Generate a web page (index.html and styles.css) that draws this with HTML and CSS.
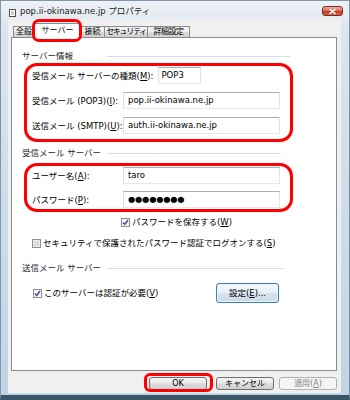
FILE: index.html
```html
<!DOCTYPE html>
<html lang="ja">
<head>
 <meta charset="UTF-8">
 <title>pop.ii-okinawa.ne.jp プロパティ</title>
 <link rel="stylesheet" href="styles.css">
</head>
<body>
<div class="window">
 <div class="titlebar">
  <svg class="appicon" width="7" height="8" viewBox="0 0 7 8"><rect x="0.5" y="0.5" width="6" height="7" fill="#fff" stroke="#4d4d4d"/><path d="M2 3h3M2 5h3" stroke="#9a9a9a"/></svg>
  <span class="title">pop.ii-okinawa.ne.jp プロパティ</span>
  <span class="close"><svg width="9" height="7" viewBox="0 0 9 7"><path d="M1.5 1l6 5M7.5 1l-6 5" stroke="#fff" stroke-width="1.6"/></svg></span>
 </div>
 <div class="client">
  <div class="tabs">
   <span class="tab tab_general">全般</span>
   <span class="tab tab_server selected">サーバー</span>
   <span class="tab tab_conn">接続</span>
   <span class="tab tab_sec">セキュリティ</span>
   <span class="tab tab_adv">詳細設定</span>
  </div>
  <div class="sheet">
   <div class="legend legend_wide"><span>サーバー情報</span><i></i></div>
   <div class="mark mark_info">
    <div class="row"><span class="lbl_auto">受信メール サーバーの種類(<u>M</u>):</span><span class="field field_short">POP3</span></div>
    <div class="row"><span class="lbl">受信メール (POP3)(<u>I</u>):</span><span class="field">pop.ii-okinawa.ne.jp</span></div>
    <div class="row"><span class="lbl">送信メール (SMTP)(<u>U</u>):</span><span class="field">auth.ii-okinawa.ne.jp</span></div>
   </div>
   <div class="legend legend_in"><span>受信メール サーバー</span><i></i></div>
   <div class="mark mark_login">
    <div class="row"><span class="lbl">ユーザー名(<u>A</u>):</span><span class="field">taro</span></div>
    <div class="row"><span class="lbl">パスワード(<u>P</u>):</span><span class="field field_pw">●●●●●●●●</span></div>
   </div>
   <div class="check check_save">
    <svg class="box" width="9" height="9" viewBox="0 0 9 9"><rect x="0.5" y="0.5" width="8" height="8" fill="#f4f4f4" stroke="#8e8f8f"/><path d="M2 4.5l1.8 2L7 2" fill="none" stroke="#3a4f86" stroke-width="1.4"/></svg>
    <span>パスワードを保存する(<u>W</u>)</span>
   </div>
   <div class="check check_sec">
    <svg class="box" width="9" height="9" viewBox="0 0 9 9"><rect x="0.5" y="0.5" width="8" height="8" fill="#ececec" stroke="#8e8f8f"/><rect x="2" y="2" width="5" height="5" fill="#dcdcdc"/></svg>
    <span>セキュリティで保護されたパスワード認証でログオンする(<u>S</u>)</span>
   </div>
   <div class="legend legend_out"><span>送信メール サーバー</span><i></i></div>
   <div class="auth">
    <div class="check">
     <svg class="box" width="9" height="9" viewBox="0 0 9 9"><rect x="0.5" y="0.5" width="8" height="8" fill="#f4f4f4" stroke="#8e8f8f"/><path d="M2 4.5l1.8 2L7 2" fill="none" stroke="#3a4f86" stroke-width="1.4"/></svg>
     <span>このサーバーは認証が必要(<u>V</u>)</span>
    </div>
    <span class="btn btn_settings">設定(<u>E</u>)...</span>
   </div>
  </div>
  <div class="actions">
   <span class="btn btn_dlg btn_ok">OK</span>
   <span class="btn btn_dlg btn_cancel">キャンセル</span>
   <span class="btn btn_dlg disabled">適用(<u>A</u>)</span>
  </div>
 </div>
</div>
</body>
</html>
```

FILE: styles.css
```css
body{
  margin: 0;
  font-family: "DejaVu Sans", "Noto Sans CJK JP", sans-serif;
  font-size: 8.5px;
  line-height: 12px;
  color: #000;
}
.window{
  width: 350px;
  height: 400px;
  box-sizing: border-box;
  display: flex;
  flex-direction: column;
  border: 1px solid #7f95aa;
  border-bottom: 5px solid #3b5767;
  padding: 0 8px 2px 7px;
  background: linear-gradient(#eef2f5, #dbe5ee 30px, #c0d4e5);
}
.titlebar{
  height: 18px;
  display: flex;
  align-items: center;
  padding-top: 2px;
  box-sizing: border-box;
}
.appicon{
  margin: 4px 0 0 1px;
}
.title{
  margin-left: 4px;
  color: #1a1a1a;
}
.close{
  margin-left: auto;
  margin-right: -2px;
  width: 21px;
  height: 10px;
  box-sizing: border-box;
  border: 1px solid #7a2a20;
  border-radius: 3px;
  background: linear-gradient(#eab3a6, #d5664f 50%, #c23a22 51%, #d2603f);
  display: flex;
  align-items: center;
  justify-content: center;
}
.client{
  flex: 1;
  display: flex;
  flex-direction: column;
  background: #f0f0f0;
  padding: 4px 4px 0 3px;
}

/* tabs */
.tabs{
  display: flex;
  align-items: flex-end;
  height: 15px;
  padding-left: 2px;
  margin-bottom: -1px;
  position: relative;
  z-index: 1;
}
.tab{
  height: 11px;
  margin-bottom: 1px;
  margin-left: -1px;
  box-sizing: border-box;
  border: 1px solid #898c95;
  border-bottom: none;
  background: linear-gradient(#f2f2f2, #ebebeb 50%, #dddddd 50%, #cfcfcf);
  font-size: 8px;
  line-height: 10px;
  text-align: center;
  white-space: nowrap;
}
.tab_general{ width: 22px; margin-left: 0; }
.tab_server{ width: 47px; }
.tab_conn{ width: 25px; }
.tab_sec{ width: 44px; letter-spacing: -1.3px; }
.tab_adv{ width: 43px; letter-spacing: -0.5px; }
.tab.selected{
  height: 15px;
  margin-bottom: 0;
  background: #fff;
  line-height: 13px;
  position: relative;
  z-index: 2;
}
.tab.selected::after{
  content: "";
  position: absolute;
  left: -3px;
  right: -2px;
  top: -5px;
  bottom: -4px;
  border: 3px solid #f00;
  border-radius: 7px;
}

/* sheet */
.sheet{
  height: 334px;
  box-sizing: border-box;
  border: 1px solid #898c95;
  background: #fff;
  padding: 12px 0 0 10px;
}
.legend{
  display: grid;
  grid-template-columns: 85px 1fr;
  align-items: center;
  width: 262px;
  height: 12px;
  color: #1e1e1e;
  white-space: nowrap;
}
.legend i{
  display: block;
  border-top: 1px solid #d5dfe5;
}
.legend_wide{ width: 268px; }
.legend_in{ margin-top: 5px; width: 259px; }
.legend_out{ margin-top: 13px; width: 261px; }
.mark{
  margin-left: 2px;
  width: 269px;
  box-sizing: border-box;
  border: 3px solid #f00;
  border-radius: 13px;
  display: flex;
  flex-direction: column;
}
.mark_info{
  margin-top: 1px;
  gap: 8px;
  padding: 1px 10px 5px 5px;
}
.mark_login{
  margin-top: 4px;
  gap: 7px;
  padding: 1px 10px 1px 5px;
}
.row{
  display: flex;
  align-items: center;
  height: 17px;
  white-space: nowrap;
}
.lbl{
  width: 91px;
  flex: none;
}
.lbl_auto{
  margin-right: 5px;
}
.field{
  width: 157px;
  height: 17px;
  box-sizing: border-box;
  border: 1px solid;
  border-color: #abadb3 #e2e3ea #e3e9ef #dbdfe6;
  padding-left: 4px;
  line-height: 15px;
  background: #fff;
}
.field_short{
  width: 43px;
  padding-left: 2px;
}
.field_pw{
  font-size: 8.2px;
  letter-spacing: -0.1px;
}
.check{
  display: flex;
  align-items: center;
  gap: 2px;
  height: 12px;
  white-space: nowrap;
}
.check_save{
  margin: 4px 0 0 99px;
}
.check_sec{
  margin: 9px 0 0 10px;
}
.auth{
  margin-top: 9px;
  width: 257px;
  height: 20px;
  box-sizing: border-box;
  padding-left: 11px;
  display: flex;
  align-items: center;
  justify-content: space-between;
}

/* buttons */
.btn{
  box-sizing: border-box;
  border: 1px solid #707070;
  border-radius: 3px;
  background: linear-gradient(#f2f2f2, #ebebeb 50%, #dddddd 50%, #cfcfcf);
  text-align: center;
  white-space: nowrap;
}
.btn_settings{
  width: 63px;
  height: 20px;
  line-height: 18px;
  border-color: #3c7fb1;
  background: linear-gradient(#f4f8fb, #e6eff6 50%, #d5e4ef 50%, #cbdbe8);
  box-shadow: inset 0 0 0 1px #e9f4fb;
}
.actions{
  display: flex;
  justify-content: flex-end;
  padding-top: 6px;
}
.btn_dlg{
  width: 58px;
  height: 13px;
  font-size: 8px;
  line-height: 11px;
}
.btn_ok{
  position: relative;
  margin-right: 9px;
}
.btn_ok::after{
  content: "";
  position: absolute;
  left: -6px;
  right: -7px;
  top: -5px;
  bottom: -3px;
  border: 3px solid #f00;
  border-radius: 6px;
}
.btn_cancel{
  margin-right: 5px;
}
.btn_dlg.disabled{
  border-color: #adb2b5;
  background: #f4f4f4;
  color: #838383;
}
```
